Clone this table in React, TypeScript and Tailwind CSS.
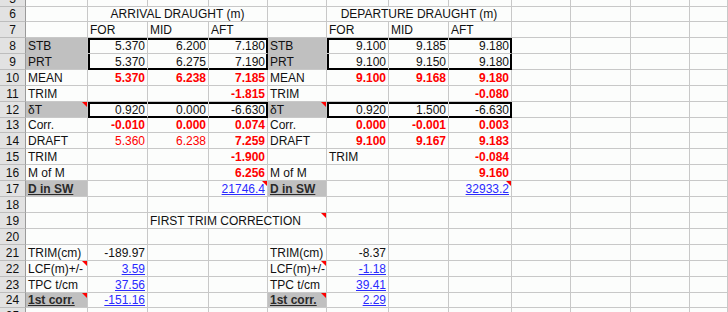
import React from "react";

type Cell = {
  t?: string;
  a?: "l" | "r" | "c";
  s?: "red" | "redb" | "link" | "bu";
  g?: boolean;
  tri?: boolean;
  span?: boolean;
  box?: "tl" | "t" | "tr" | "bl" | "b" | "br" | "l1" | "m1" | "r1";
  noB?: boolean;
};

const E: Cell = {};
const L = (t: string, extra: Partial<Cell> = {}): Cell => ({ t, a: "l", ...extra });
const N = (t: string, extra: Partial<Cell> = {}): Cell => ({ t, a: "r", ...extra });
const RB = (t: string, extra: Partial<Cell> = {}): Cell => ({ t, a: "r", s: "redb", ...extra });
const LK = (t: string, extra: Partial<Cell> = {}): Cell => ({ t, a: "r", s: "link", ...extra });
const tail = (n: number): Cell[] => Array.from({ length: n }, () => E);

const rows: { n: number; cells: Cell[] }[] = [
  { n: 5, cells: tail(12) },
  {
    n: 6,
    cells: [
      E,
      { t: "ARRIVAL DRAUGHT (m)", a: "c", span: true },
      E,
      { t: "DEPARTURE DRAUGHT (m)", a: "c", span: true },
      ...tail(4),
    ],
  },
  {
    n: 7,
    cells: [E, L("FOR"), L("MID"), L("AFT"), E, L("FOR"), L("MID"), L("AFT"), ...tail(4)],
  },
  {
    n: 8,
    cells: [
      L("STB", { g: true, noB: true }),
      N("5.370", { box: "tl" }),
      N("6.200", { box: "t" }),
      N("7.180", { box: "tr" }),
      L("STB", { g: true, noB: true }),
      N("9.100", { box: "tl" }),
      N("9.185", { box: "t" }),
      N("9.180", { box: "tr" }),
      ...tail(4),
    ],
  },
  {
    n: 9,
    cells: [
      L("PRT", { g: true }),
      N("5.370", { box: "bl" }),
      N("6.275", { box: "b" }),
      N("7.190", { box: "br" }),
      L("PRT", { g: true }),
      N("9.100", { box: "bl" }),
      N("9.150", { box: "b" }),
      N("9.180", { box: "br" }),
      ...tail(4),
    ],
  },
  {
    n: 10,
    cells: [
      L("MEAN"),
      RB("5.370"),
      RB("6.238"),
      RB("7.185"),
      L("MEAN"),
      RB("9.100"),
      RB("9.168"),
      RB("9.180"),
      ...tail(4),
    ],
  },
  {
    n: 11,
    cells: [L("TRIM"), E, E, RB("-1.815"), L("TRIM"), E, E, RB("-0.080"), ...tail(4)],
  },
  {
    n: 12,
    cells: [
      L("δT", { g: true, tri: true }),
      N("0.920", { box: "l1" }),
      N("0.000", { box: "m1" }),
      N("-6.630", { box: "r1" }),
      L("δT", { g: true, tri: true }),
      N("0.920", { box: "l1" }),
      N("1.500", { box: "m1" }),
      N("-6.630", { box: "r1" }),
      ...tail(4),
    ],
  },
  {
    n: 13,
    cells: [
      L("Corr."),
      RB("-0.010"),
      RB("0.000"),
      RB("0.074"),
      L("Corr."),
      RB("0.000"),
      RB("-0.001"),
      RB("0.003"),
      ...tail(4),
    ],
  },
  {
    n: 14,
    cells: [
      L("DRAFT"),
      N("5.360", { s: "red" }),
      N("6.238", { s: "red" }),
      RB("7.259"),
      L("DRAFT"),
      RB("9.100"),
      RB("9.167"),
      RB("9.183"),
      ...tail(4),
    ],
  },
  {
    n: 15,
    cells: [L("TRIM"), E, E, RB("-1.900"), E, L("TRIM"), E, RB("-0.084"), ...tail(4)],
  },
  {
    n: 16,
    cells: [L("M of M"), E, E, RB("6.256"), L("M of M"), E, E, RB("9.160"), ...tail(4)],
  },
  {
    n: 17,
    cells: [
      L("D in SW", { g: true, s: "bu" }),
      E,
      E,
      LK("21746.4", { tri: true }),
      L("D in SW", { g: true, s: "bu" }),
      E,
      E,
      LK("32933.2", { tri: true }),
      ...tail(4),
    ],
  },
  { n: 18, cells: tail(12) },
  {
    n: 19,
    cells: [E, E, { t: "FIRST TRIM CORRECTION", a: "l", span: true, tri: true }, ...tail(7)],
  },
  { n: 20, cells: tail(12) },
  {
    n: 21,
    cells: [L("TRIM(cm)"), N("-189.97"), E, E, L("TRIM(cm)"), N("-8.37"), ...tail(6)],
  },
  {
    n: 22,
    cells: [
      L("LCF(m)+/-", { tri: true }),
      LK("3.59"),
      E,
      E,
      L("LCF(m)+/-", { tri: true }),
      LK("-1.18"),
      ...tail(6),
    ],
  },
  {
    n: 23,
    cells: [L("TPC t/cm"), LK("37.56"), E, E, L("TPC t/cm"), LK("39.41"), ...tail(6)],
  },
  {
    n: 24,
    cells: [
      L("1st corr.", { g: true, s: "bu", tri: true }),
      LK("-151.16"),
      E,
      E,
      L("1st corr.", { g: true, s: "bu", tri: true }),
      LK("2.29"),
      ...tail(6),
    ],
  },
  { n: 25, cells: tail(12) },
];

const BOX: Record<string, string> = {
  tl: "shadow-[inset_2px_2px_0_0_#000]",
  t: "shadow-[inset_0_2px_0_0_#000]",
  tr: "shadow-[inset_-1px_2px_0_0_#000]",
  bl: "shadow-[inset_2px_-1px_0_0_#000]",
  b: "shadow-[inset_0_-1px_0_0_#000]",
  br: "shadow-[inset_-1px_-1px_0_0_#000]",
  l1: "shadow-[inset_2px_2px_0_0_#000,inset_0_-1px_0_0_#000]",
  m1: "shadow-[inset_0_2px_0_0_#000,inset_0_-1px_0_0_#000]",
  r1: "shadow-[inset_-1px_2px_0_0_#000,inset_0_-1px_0_0_#000]",
};

const STYLE: Record<string, string> = {
  red: "text-[#ff0000]",
  redb: "text-[#ff0000] font-bold",
  link: "text-[#2a2aff] underline",
  bu: "font-bold underline text-[#2a2a2a]",
};

const ALIGN: Record<string, string> = {
  l: "justify-start pl-[2px]",
  r: "justify-end pr-[2px]",
  c: "justify-center",
};

function Tri() {
  return (
    <svg width="5" height="5" viewBox="0 0 5 5" className="absolute top-0 right-0">
      <polygon points="0,0 5,0 5,5" fill="#ff0000" />
    </svg>
  );
}

function SheetCell({ c }: { c: Cell }) {
  const rightBlack = c.box === "tr" || c.box === "br" || c.box === "r1";
  const bottomBlack =
    c.box === "bl" || c.box === "b" || c.box === "br" || c.box === "l1" || c.box === "m1" || c.box === "r1";
  const rc = rightBlack ? "border-r-black" : "border-r-[#c8c8c8]";
  const bc = bottomBlack ? "border-b-black" : c.noB ? "border-b-[#c0c0c0]" : "border-b-[#c8c8c8]";
  const bg = c.g ? "bg-[#c0c0c0]" : "";
  const span = c.span ? "col-span-3" : "";
  const box = c.box ? BOX[c.box] : "";
  const st = c.s ? STYLE[c.s] : "text-[#111]";
  const al = ALIGN[c.a ?? "l"];
  return (
    <div
      className={`relative flex items-end whitespace-nowrap border-r border-b leading-[14px] ${rc} ${bc} ${bg} ${span} ${box} ${al}`}
    >
      {c.t ? <span className={st}>{c.t}</span> : null}
      {c.tri ? <Tri /> : null}
    </div>
  );
}

export default function App() {
  return (
    <div className="w-[728px] h-[312px] overflow-hidden bg-[#fcfdfc] font-['Liberation_Sans',Arial,sans-serif] text-[12px]">
      <div className="-mt-[9px] grid grid-cols-[26px_62px_60px_61px_59px_59px_62px_60px_63px_59px_60px_59px_1fr] grid-rows-[16px_15px_16px_16px_16px_16px_16px_16px_15px_16px_16px_16px_16px_16px_16px_16px_16px_16px_16px_15px_16px]">
        {rows.map((r) => (
          <React.Fragment key={r.n}>
            <div className="flex items-end justify-center bg-[#e2e2e2] border-r border-r-[#9a9a9a] border-b border-b-[#bdbdbd] leading-[14px] text-[#111]">
              {r.n}
            </div>
            {r.cells.map((c, i) => (
              <SheetCell key={i} c={c} />
            ))}
          </React.Fragment>
        ))}
      </div>
    </div>
  );
}
